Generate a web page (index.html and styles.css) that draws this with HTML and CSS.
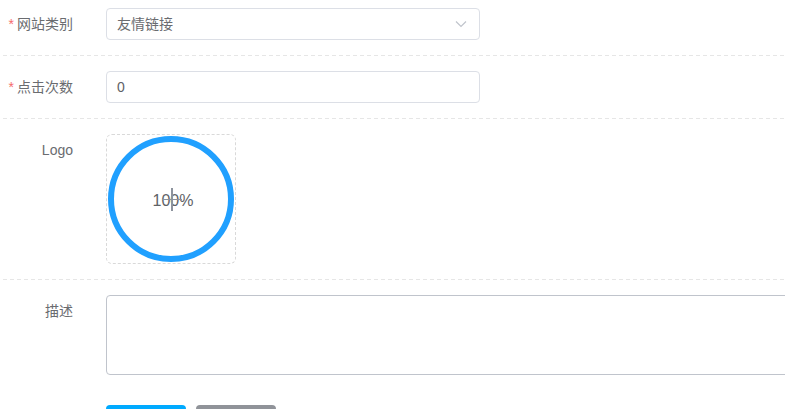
FILE: index.html
```html
<!DOCTYPE html>
<html lang="zh">
<head>
<meta charset="utf-8">
<title>编辑链接</title>
<link rel="stylesheet" href="styles.css">
</head>
<body>
<form class="form">
  <div class="row row-first">
    <label class="label"><span class="req">*</span>网站类别</label>
    <div class="control">
      <div class="select">
        <span class="select-text">友情链接</span>
        <svg class="arrow" width="12" height="8" viewBox="0 0 12 8"><path d="M1 1.5 L6 6.5 L11 1.5" fill="none" stroke="#c0c4cc" stroke-width="1.2"/></svg>
      </div>
    </div>
  </div>
  <div class="row">
    <label class="label"><span class="req">*</span>点击次数</label>
    <div class="control">
      <div class="input">0</div>
    </div>
  </div>
  <div class="row">
    <label class="label">Logo</label>
    <div class="control">
      <div class="upload">
        <svg class="ring" width="126" height="126" viewBox="0 0 126 126"><circle cx="63" cy="63" r="60" fill="none" stroke="#20a0ff" stroke-width="6"/></svg>
        <span class="pct">100%</span>
        <span class="caret"></span>
        <span class="bar"></span>
      </div>
    </div>
  </div>
  <div class="row row-plain">
    <label class="label">描述</label>
    <div class="control">
      <div class="textarea"></div>
    </div>
  </div>
  <div class="row row-plain">
    <span class="label"></span>
    <div class="control buttons">
      <button type="button" class="btn btn-primary">确定</button>
      <button type="button" class="btn btn-gray">取消</button>
    </div>
  </div>
</form>
</body>
</html>
```

FILE: styles.css
```css
html, body {
  margin: 0;
  padding: 0;
  overflow: hidden;
  background: #fff;
  font-family: "Liberation Sans", "Noto Sans CJK SC", sans-serif;
  font-size: 14px;
  color: #606266;
}

.form {
  padding-left: 3px;
}

.row {
  display: flex;
  align-items: flex-start;
  gap: 33px;
  padding: 15px 0 16px;
  background-image: repeating-linear-gradient(to right, #e6e6e6 0 4px, transparent 4px 7px);
  background-size: 100% 1px;
  background-repeat: no-repeat;
  background-position: left bottom;
}

.row-first {
  padding-top: 8px;
}

.row-plain {
  background-image: none;
  padding-bottom: 15px;
}

.label {
  width: 70px;
  flex: none;
  text-align: right;
  line-height: 32px;
  color: #6a6c70;
}

.req {
  color: #f56c6c;
  margin-right: 3px;
}

.control {
  flex: 1;
  min-width: 0;
}

.select, .input {
  box-sizing: border-box;
  width: 374px;
  height: 32px;
  border: 1px solid #dcdfe6;
  border-radius: 4px;
  padding: 0 10px;
  line-height: 30px;
  color: #606266;
  display: flex;
  align-items: center;
}

.select-text {
  flex: 1;
  color: #6a6c70;
}

.arrow {
  margin-right: 2px;
}

.upload {
  position: relative;
  box-sizing: border-box;
  width: 130px;
  height: 130px;
  border: 1px dashed #d9d9d9;
  border-radius: 6px;
  display: flex;
  align-items: center;
  justify-content: center;
}

.ring {
  display: block;
}

.pct {
  position: absolute;
  left: 4px;
  right: 0;
  top: 57px;
  text-align: center;
  font-size: 16px;
  color: #606266;
  line-height: 18px;
}

.caret {
  position: absolute;
  left: 64px;
  top: 53px;
  width: 2px;
  height: 23px;
  background: #8c939d;
}

.bar {
  position: absolute;
  left: 55px;
  top: 64px;
  width: 20px;
  height: 1px;
  background: #8c939d;
}

.textarea {
  box-sizing: border-box;
  width: 720px;
  height: 80px;
  border: 1px solid #c0c4cc;
  border-radius: 4px;
}

.buttons {
  display: flex;
  gap: 10px;
}

.btn {
  width: 80px;
  height: 32px;
  border: none;
  border-radius: 4px;
  color: #fff;
  font-family: inherit;
  font-size: 14px;
}

.btn-primary {
  background: #00aaff;
}

.btn-gray {
  background: #909399;
}
```
